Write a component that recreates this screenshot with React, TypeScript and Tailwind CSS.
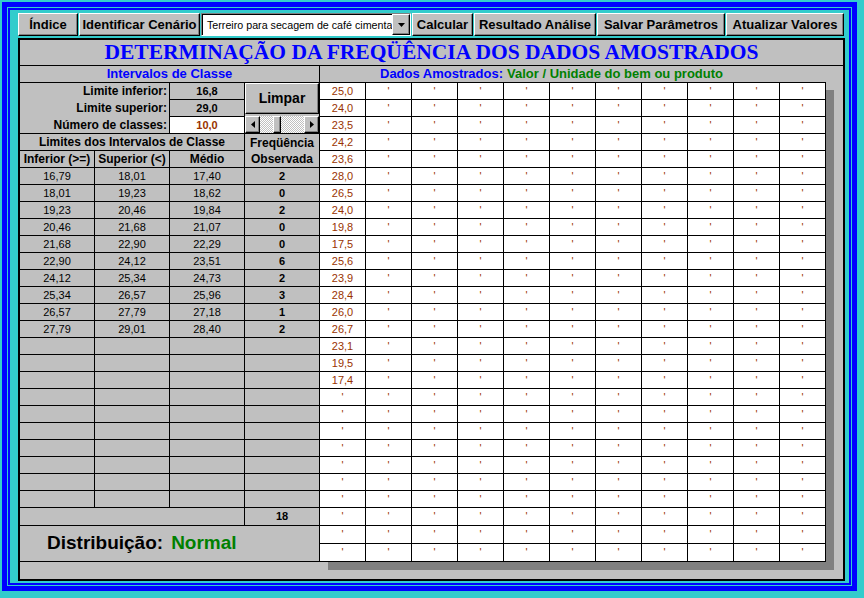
import React from 'react';

const classRows = [
  ['16,79', '18,01', '17,40', '2'],
  ['18,01', '19,23', '18,62', '0'],
  ['19,23', '20,46', '19,84', '2'],
  ['20,46', '21,68', '21,07', '0'],
  ['21,68', '22,90', '22,29', '0'],
  ['22,90', '24,12', '23,51', '6'],
  ['24,12', '25,34', '24,73', '2'],
  ['25,34', '26,57', '25,96', '3'],
  ['26,57', '27,79', '27,18', '1'],
  ['27,79', '29,01', '28,40', '2'],
];

const samples = [
  '25,0', '24,0', '23,5', '24,2', '23,6', '28,0', '26,5', '24,0', '19,8',
  '17,5', '25,6', '23,9', '28,4', '26,0', '26,7', '23,1', '19,5', '17,4',
];

const bevel =
  'bg-[#c0c0c0] border border-t-white border-l-white border-r-black border-b-black shadow-[inset_-1px_-1px_0_#808080]';

const cell = 'bg-[#c0c0c0] flex items-center justify-center text-black';

function ToolButton({ label, width }: { label: string; width: string }) {
  return (
    <button className={`${width} h-full ${bevel} flex items-center justify-center text-[13px] font-bold text-black leading-none`}>
      {label}
    </button>
  );
}

function Arrow({ dir }: { dir: 'left' | 'right' | 'down' }) {
  if (dir === 'down') {
    return (
      <svg width="7" height="4" viewBox="0 0 7 4">
        <path d="M0 0H7L3.5 4Z" fill="#000" />
      </svg>
    );
  }
  return (
    <svg width="4" height="7" viewBox="0 0 4 7">
      <path d={dir === 'left' ? 'M4 0V7L0 3.5Z' : 'M0 0V7L4 3.5Z'} fill="#000" />
    </svg>
  );
}

const checker = 'bg-[repeating-conic-gradient(#c0c0c0_0_25%,#ffffff_0_50%)] bg-[length:2px_2px]';

function ScrollBar() {
  return (
    <div className="h-[17px] w-full flex">
      <div className={`w-[15px] h-full ${bevel} flex items-center justify-center`}>
        <Arrow dir="left" />
      </div>
      <div className={`w-[13px] h-full ${checker}`} />
      <div className={`w-[8px] h-full ${bevel}`} />
      <div className={`flex-1 h-full ${checker}`} />
      <div className={`w-[15px] h-full ${bevel} flex items-center justify-center`}>
        <Arrow dir="right" />
      </div>
    </div>
  );
}

function LeftTable() {
  return (
    <div className="grid grid-cols-[74px_74px_74px_74px] grid-rows-[repeat(25,16px)_17px_35px] gap-px bg-black border-b border-black">
      <div className="col-span-2 row-span-3 bg-[#c0c0c0] grid grid-rows-[16px_16px_16px] gap-px text-[12px] font-bold text-black">
        <div className="flex items-center justify-end pr-[2px]">Limite inferior:</div>
        <div className="flex items-center justify-end pr-[2px]">Limite superior:</div>
        <div className="flex items-center justify-end pr-[2px]">Número de classes:</div>
      </div>
      <div className={`${cell} col-start-3 text-[11px] font-bold`}>16,8</div>
      <div className="row-span-3 col-start-4 bg-[#c0c0c0] flex flex-col justify-between">
        <button className={`h-[31px] w-full ${bevel} text-[14px] font-bold text-black`}>Limpar</button>
        <ScrollBar />
      </div>
      <div className={`${cell} col-start-3 text-[11px] font-bold`}>29,0</div>
      <div className="col-start-3 bg-white flex items-center justify-center text-[11px] font-bold text-[#993300]">10,0</div>

      <div className={`${cell} col-span-3 text-[12px] font-bold`}>Limites dos Intervalos de Classe</div>
      <div className={`${cell} row-span-2 flex-col text-[12px] font-bold leading-[16px]`}>
        <span>Freqüência</span>
        <span>Observada</span>
      </div>
      <div className={`${cell} text-[12px] font-bold`}>Inferior (&gt;=)</div>
      <div className={`${cell} text-[12px] font-bold`}>Superior (&lt;)</div>
      <div className={`${cell} text-[12px] font-bold`}>Médio</div>

      {classRows.map((r, i) => (
        <React.Fragment key={i}>
          <div className={`${cell} text-[11px]`}>{r[0]}</div>
          <div className={`${cell} text-[11px]`}>{r[1]}</div>
          <div className={`${cell} text-[11px]`}>{r[2]}</div>
          <div className={`${cell} text-[11px] font-bold`}>{r[3]}</div>
        </React.Fragment>
      ))}
      {Array.from({ length: 40 }).map((_, i) => (
        <div key={`e${i}`} className="bg-[#c0c0c0]" />
      ))}
      <div className="col-span-3 bg-[#c0c0c0]" />
      <div className={`${cell} text-[11px] font-bold`}>18</div>
      <div className="col-span-4 bg-[#c0c0c0] flex items-center pl-[27px] text-[19px] font-bold">
        <span className="text-black">Distribuição:</span>
        <span className="ml-[8px] text-[#008000]">Normal</span>
      </div>
    </div>
  );
}

function SampleGrid() {
  const rows = Array.from({ length: 28 });
  return (
    <div className="w-[506px] grid grid-cols-[repeat(11,45px)] grid-rows-[repeat(25,16px)_17px_17px_17px] gap-px bg-black border-t border-r border-b border-black shadow-[8px_8px_0_#808080]">
      {rows.map((_, r) =>
        Array.from({ length: 11 }).map((__, c) => {
          const isValue = c === 0 && r < samples.length;
          return (
            <div
              key={`${r}-${c}`}
              className={`bg-white flex justify-center text-[11px] text-[#993300] ${isValue ? 'items-center pt-px' : 'leading-[16px]'}`}
            >
              {isValue ? samples[r] : "'"}
            </div>
          );
        })
      )}
    </div>
  );
}

export default function App() {
  return (
    <div className="w-[864px] h-[598px] bg-[#33cccc] p-[2px] overflow-hidden font-['Liberation_Sans',Arial,Helvetica,sans-serif]">
      <div className="w-[855px] h-[589px] border-[5px] border-[#0000ff] p-px">
        <div className="h-full border-2 border-[#0000ff] pl-[8px] pt-[3px]">
          {/* toolbar */}
          <div className="flex gap-px h-[23px]">
            <ToolButton label="Índice" width="w-[60px]" />
            <ToolButton label="Identificar Cenário" width="w-[121px]" />
            <div className="w-[210px] h-full flex border border-t-[#808080] border-l-[#808080] border-r-white border-b-white shadow-[inset_1px_1px_0_#000]">
              <div className="flex-1 h-full bg-white mt-px ml-px flex items-center px-[4px] overflow-hidden whitespace-nowrap text-[10.7px] text-black">
                Terreiro para secagem de café cimentado
              </div>
              <div className={`w-[18px] h-full ${bevel} flex items-center justify-center`}>
                <Arrow dir="down" />
              </div>
            </div>
            <ToolButton label="Calcular" width="w-[61px]" />
            <ToolButton label="Resultado Análise" width="w-[122px]" />
            <ToolButton label="Salvar Parâmetros" width="w-[128px]" />
            <ToolButton label="Atualizar Valores" width="w-[118px]" />
          </div>

          {/* main panel */}
          <div className="mt-[2px] w-[827px] h-[543px] border-2 border-black bg-[#c0c0c0] flex flex-col">
            <div className="h-[26px] border-b border-black flex items-center justify-center text-[21.5px] font-bold leading-none text-[#0000ff] font-['Liberation_Serif','Times_New_Roman',serif]">
              DETERMINAÇÃO DA FREQÜÊNCIA DOS DADOS AMOSTRADOS
            </div>
            <div className="h-[496px] flex">
              <div className="w-[300px] border-r border-black flex flex-col">
                <div className="h-[17px] border-b border-black flex items-center justify-center text-[13px] font-bold text-[#0000ff]">
                  Intervalos de Classe
                </div>
                <LeftTable />
              </div>
              <div className="flex-1 flex flex-col">
                <div className="h-[16px] flex items-center pl-[60px] text-[13px] font-bold whitespace-nowrap">
                  <span className="text-[#0000ff]">Dados Amostrados:</span>
                  <span className="ml-[4px] text-[#008000]">Valor / Unidade do bem ou produto</span>
                </div>
                <SampleGrid />
              </div>
            </div>
            <div className="h-[16px]" />
          </div>
        </div>
      </div>
    </div>
  );
}
